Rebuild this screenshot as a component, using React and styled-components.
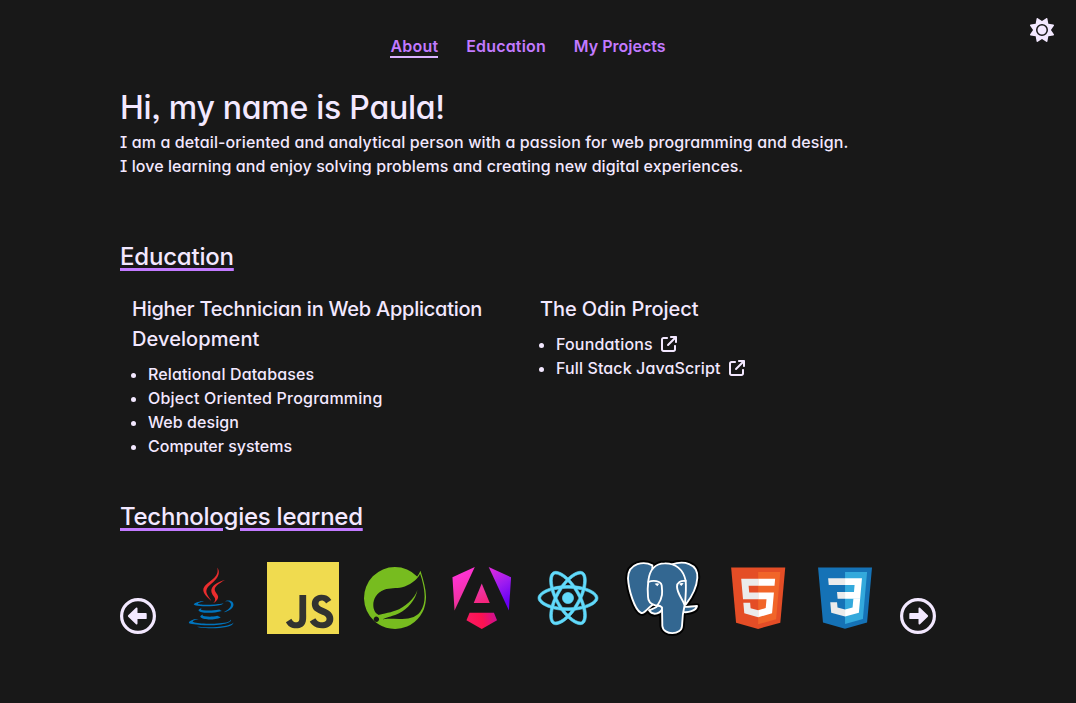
import React from "react";
import styled, { createGlobalStyle } from "styled-components";
import { FaSun, FaArrowUpRightFromSquare } from "react-icons/fa6";
import { SiSpring, SiReact } from "react-icons/si";

const Global = createGlobalStyle`
  *, *::before, *::after { box-sizing: border-box; margin: 0; padding: 0; }
  body {
    background: #181818;
    color: #f3e8ff;
    font: 450 16px/24px Inter, "Noto Sans", sans-serif;
    font-feature-settings: "cv11", "ss03";
  }
`;

const Page = styled.div`
  position: relative;
  min-height: 703px;
  padding: 34px 0 0 120px;
`;
const ThemeButton = styled.button`
  position: absolute;
  top: 18px;
  right: 22px;
  width: 24px;
  height: 24px;
  border: 0;
  background: none;
  color: #f3e8ff;
  cursor: pointer;
  svg { display: block; }
`;
const Content = styled.div`
  width: 816px;
`;
const Nav = styled.nav`
  display: flex;
  justify-content: center;
  gap: 28px;
  height: 52px;
`;
const NavLink = styled.a`
  height: 24px;
  white-space: nowrap;
  font-weight: 600;
  letter-spacing: ${(p) => p.$track}px;
  color: #c27aff;
  border-bottom: 2px solid ${(p) => (p.$active ? "#dab2ff" : "transparent")};
`;
const Title = styled.h1`
  font-size: 32px;
  line-height: 44px;
  font-weight: 480;
  letter-spacing: -0.26px;
`;
const Line = styled.p`
  white-space: nowrap;
  letter-spacing: ${(p) => p.$track}px;
  font-weight: 500;
  font-feature-settings: "cv11", "ss03", "cv08";
`;
const Heading = styled.h2`
  font-size: 24px;
  line-height: 36px;
  font-weight: 500;
  letter-spacing: ${(p) => p.$track}px;
  text-decoration: underline #c27aff 3px;
  text-underline-offset: 3px;
`;
const Section = styled.section`
  margin-top: ${(p) => p.$top}px;
`;
const Columns = styled.div`
  display: grid;
  grid-template-columns: 1fr 1fr;
  margin-top: 19px;
`;
const Course = styled.div`
  padding-left: 12px;
`;
const CourseTitle = styled.h3`
  font-size: 20px;
  line-height: 30px;
  font-weight: 490;
  letter-spacing: ${(p) => p.$track}px;
  margin-bottom: 8px;
`;
const SecondLine = styled.span`
  display: block;
  letter-spacing: 0.08px;
`;
const List = styled.ul`
  list-style: none;
`;
const Item = styled.li`
  display: flex;
  align-items: center;
  height: 24px;
  font-weight: 500;
  letter-spacing: ${(p) => p.$track}px;
  &::before {
    content: "";
    width: 5px;
    height: 5px;
    margin: 2px 12px 0 -1px;
    border-radius: 50%;
    background: #f3e8ff;
  }
  svg { margin-left: 8px; }
`;
const Carousel = styled.div`
  display: flex;
  align-items: center;
  justify-content: space-between;
  height: 72px;
  margin-top: 27px;
`;
const Arrow = styled.button`
  align-self: flex-end;
  width: 36px;
  height: 36px;
  border: 0;
  background: none;
  cursor: pointer;
  svg { display: block; transform: ${(p) => (p.$next ? "scaleX(-1)" : "none")}; }
`;
const Logo = styled.div`
  flex: none;
  display: flex;
  align-items: center;
  justify-content: center;
  width: ${(p) => p.$w || 62}px;
  height: ${(p) => p.$h || 62}px;
  color: ${(p) => p.$color || "inherit"};
  svg { flex: none; display: block; }
`;

const ArrowIcon = () => (
  <svg width="36" height="36" viewBox="0 0 36 36">
    <circle cx="18" cy="18" r="16.4" fill="none" stroke="#f3e8ff" strokeWidth="3.2" />
    <path d="M8.8 18 16.6 10.4V15.8H25.8V20.2H16.6V25.6Z" fill="#f3e8ff" stroke="#f3e8ff" strokeWidth="1.8" strokeLinejoin="round" />
  </svg>
);

const Java = () => (
  <svg width="62" height="62" viewBox="1.6 0 128 128">
    <g fill="#0074BD">
      <path d="M47.617 98.12s-4.767 2.774 3.397 3.71c9.892 1.13 14.947.968 25.845-1.092 0 0 2.871 1.795 6.873 3.351-24.439 10.47-55.308-.607-36.115-5.969zm-2.988-13.665s-5.348 3.959 2.823 4.805c10.567 1.091 18.91 1.18 33.354-1.6 0 0 1.993 2.025 5.132 3.131-29.542 8.64-62.446.68-41.309-6.336z" />
      <path d="M102.123 108.229s3.529 2.91-3.888 5.159c-14.102 4.272-58.706 5.56-71.094.171-4.451-1.938 3.899-4.625 6.526-5.192 2.739-.593 4.303-.485 4.303-.485-4.953-3.487-32.013 6.85-13.743 9.815 49.821 8.076 90.817-3.637 77.896-9.468zM49.912 70.294s-22.686 5.389-8.033 7.348c6.188.828 18.518.638 30.011-.326 9.39-.789 18.813-2.474 18.813-2.474s-3.308 1.419-5.704 3.053c-23.042 6.061-67.544 3.238-54.731-2.958 10.832-5.239 19.644-4.643 19.644-4.643zm40.697 22.747c23.421-12.167 12.591-23.86 5.032-22.285-1.848.385-2.677.72-2.677.72s.688-1.079 2-1.543c14.953-5.255 26.451 15.503-4.823 23.725 0-.002.359-.327.468-.617z" />
      <path d="M52.214 126.021c22.476 1.437 57-.8 57.817-11.436 0 0-1.571 4.032-18.577 7.231-19.186 3.612-42.854 3.191-56.887.874 0 .001 2.875 2.381 17.647 3.331z" />
    </g>
    <g fill="#EA2D2E">
      <path d="M69.802 61.271c6.025 6.935-1.58 13.17-1.58 13.17s15.289-7.891 8.269-17.777c-6.559-9.215-11.587-13.792 15.635-29.58 0 .001-42.731 10.67-22.324 34.187z" />
      <path d="M76.491 1.587S89.459 14.563 64.188 34.51c-20.266 16.006-4.621 25.13-.007 35.559-11.831-10.673-20.509-20.07-14.688-28.815C58.041 28.42 81.722 22.195 76.491 1.587z" />
    </g>
  </svg>
);

const JavaScript = () => (
  <svg width="72" height="72" viewBox="1.4 1.4 125.2 125.2">
    <path fill="#F0DB4F" d="M1.408 1.408h125.184v125.185H1.408z" />
    <path fill="#323330" d="M116.347 96.736c-.917-5.711-4.641-10.508-15.672-14.981-3.832-1.761-8.104-3.022-9.377-5.926-.452-1.69-.512-2.642-.226-3.665.821-3.32 4.784-4.355 7.925-3.403 2.023.678 3.938 2.237 5.093 4.724 5.402-3.498 5.391-3.475 9.163-5.879-1.381-2.141-2.118-3.129-3.022-4.045-3.249-3.629-7.676-5.498-14.756-5.355l-3.688.477c-3.534.893-6.902 2.748-8.877 5.235-5.926 6.724-4.236 18.492 2.975 23.335 7.104 5.332 17.54 6.545 18.873 11.531 1.297 6.104-4.486 8.08-10.234 7.378-4.236-.881-6.592-3.034-9.139-6.949-4.688 2.713-4.688 2.713-9.508 5.485 1.143 2.499 2.344 3.63 4.26 5.795 9.068 9.198 31.76 8.746 35.83-5.176.165-.478 1.261-3.666.38-8.581zM69.462 58.943H57.753l-.048 30.272c0 6.438.333 12.34-.714 14.149-1.713 3.558-6.152 3.117-8.175 2.427-2.059-1.012-3.106-2.451-4.319-4.485-.333-.584-.583-1.036-.667-1.071l-9.52 5.83c1.583 3.249 3.915 6.069 6.902 7.901 4.462 2.678 10.459 3.499 16.731 2.059 4.082-1.189 7.604-3.652 9.448-7.401 2.666-4.915 2.094-10.864 2.07-17.444.06-10.735.001-21.468.001-32.237z" />
  </svg>
);

const Angular = () => (
  <svg width="62" height="62" viewBox="0.1 0 24 24">
    <defs>
      <linearGradient id="ngWarm" gradientUnits="userSpaceOnUse" x1="4" y1="2" x2="14" y2="22">
        <stop offset="0" stopColor="#ff33d6" />
        <stop offset="0.45" stopColor="#f0329f" />
        <stop offset="1" stopColor="#ff0f3c" />
      </linearGradient>
      <linearGradient id="ngCool" gradientUnits="userSpaceOnUse" x1="14.5" y1="1" x2="22.5" y2="13">
        <stop offset="0" stopColor="#e02be0" />
        <stop offset="0.55" stopColor="#9a1bf0" />
        <stop offset="1" stopColor="#6a00f5" />
      </linearGradient>
      <linearGradient id="ngBase" gradientUnits="userSpaceOnUse" x1="6" y1="21" x2="18" y2="18">
        <stop offset="0" stopColor="#fa1a63" />
        <stop offset="0.5" stopColor="#fb1250" />
        <stop offset="1" stopColor="#c80f9c" />
      </linearGradient>
    </defs>
    <path fill="url(#ngWarm)" d="M9.308 0 .662 3.999l.814 12.856L9.308 0Z" />
    <path fill="url(#ngCool)" d="M14.692 0l7.832 16.855.814-12.856L14.692 0Z" />
    <path fill="url(#ngWarm)" d="M8.903 13.93h6.198L12 6.396 8.903 13.93Z" />
    <path fill="url(#ngBase)" d="M16.712 17.711H7.288l-1.204 2.916L12 24l5.916-3.373-1.204-2.916Z" />
  </svg>
);

const EAR_LEFT = "M113 46C90 34 41 36 40 85C42 122 60 178 78 188C88 194 96 176 114 164Z";
const EAR_RIGHT = "M172 43C205 32 251 38 248 84C246 112 230 142 213 164L190 120Z";
const TUSK_LEFT = "M103 181C110 176 122 177 130 166L144 170C142 190 116 200 103 181Z";
const TUSK_RIGHT = "M204 169C216 174 230 168 247 168C245 182 220 190 201 185Z";
const HEAD = "M100 140C98 122 99 108 101 92C105 60 122 40 150 40C182 39 206 58 213 92C215 118 213 140 211 160C207 176 203 190 202 228C201 256 146 257 143 228L142 172C134 164 128 168 122 166C108 162 100 156 100 140Z";

const Postgres = () => (
  <svg width="80" height="76" viewBox="25 30 240 228">
    <g fill="#000" stroke="#000" strokeWidth="17" strokeLinejoin="round">
      <path d={EAR_LEFT} /><path d={EAR_RIGHT} /><path d={TUSK_LEFT} /><path d={TUSK_RIGHT} /><path d={HEAD} />
    </g>
    <g fill="#336791" stroke="#fff" strokeWidth="5.6" strokeLinejoin="round" strokeLinecap="round">
      <path d={EAR_LEFT} />
      <path d={EAR_RIGHT} />
      <path d={TUSK_LEFT} />
      <path d={TUSK_RIGHT} />
      <path d={HEAD} />
      <path fill="none" d="M101 96C115 90 138 92 141 106C143 124 146 142 129 165" />
      <path fill="none" d="M213 93C198 91 187 98 187 110C188 132 202 144 209 163" />
    </g>
    <path d="M120 101Q127 98 134 101L128 109ZM193 101Q200 97 207 100L200 108Z" fill="#fff" />
  </svg>
);

const Html = () => (
  <svg width="63" height="62.4" viewBox="-1.4 0.6 128 126.6">
    <path fill="#E44D26" d="M19.037 113.876L9.032 1.661h109.936l-10.016 112.198-45.019 12.48z" />
    <path fill="#F16529" d="M64 116.8l36.378-10.086 8.559-95.878H64z" />
    <path fill="#EBEBEB" d="M64 52.455H45.788L44.53 38.361H64V24.599H29.489l.33 3.692 3.382 37.927H64zm0 35.743l-.061.017-15.327-4.14-.979-10.975H33.816l1.928 21.609 28.193 7.826.063-.017z" />
    <path fill="#fff" d="M63.952 52.455v13.763h16.947l-1.597 17.849-15.35 4.143v14.319l28.215-7.82.207-2.325 3.234-36.233.335-3.696h-3.708zm0-27.856v13.762h33.244l.276-3.092.628-6.978.329-3.692z" />
  </svg>
);

const Css = () => (
  <svg width="62.5" height="62.4" viewBox="-1.6 0.6 128 127">
    <path fill="#1572B6" d="M18.814 114.123L8.76 1.352h110.48l-10.064 112.754-45.243 12.543-45.119-12.526z" />
    <path fill="#33A9DC" d="M64.001 117.062l36.559-10.136 8.601-96.354h-45.16v106.49z" />
    <path fill="#fff" d="M64.001 51.429h18.302l1.264-14.163H64.001V23.435h34.682l-.332 3.711-3.4 38.114h-30.95V51.429z" />
    <path fill="#EBEBEB" d="M64.083 87.349l-.061.018-15.403-4.159-.985-11.031H33.752l1.937 21.717 28.331 7.863.063-.018v-14.39z" />
    <path fill="#fff" d="M81.127 64.675l-1.666 18.522-15.426 4.164v14.39l28.354-7.858.208-2.337 2.406-26.881H81.127z" />
    <path fill="#EBEBEB" d="M64.048 23.435v13.831H30.64l-.277-3.108-.63-7.012-.331-3.711h34.646zm-.047 27.996v13.831H48.792l-.277-3.108-.631-7.012-.33-3.711h16.447z" />
  </svg>
);

export default function App() {
  return (
    <>
      <Global />
      <Page>
        <ThemeButton aria-label="Toggle theme"><FaSun size={24} /></ThemeButton>
        <Content>
          <Nav>
            <NavLink $active $track={0.2}>About</NavLink>
            <NavLink $track={0.16}>Education</NavLink>
            <NavLink $track={0}>My Projects</NavLink>
          </Nav>
          <Title>Hi, my name is Paula!</Title>
          <Line $track={0.112}>I am a detail-oriented and analytical person with a passion for web programming and design.</Line>
          <Line $track={0.075}>I love learning and enjoy solving problems and creating new digital experiences.</Line>
          <Section $top={61}>
            <Heading $track={-0.2}>Education</Heading>
            <Columns>
              <Course>
                <CourseTitle $track={-0.25}>
                  Higher Technician in Web Application <SecondLine>Development</SecondLine>
                </CourseTitle>
                <List>
                  <Item $track={0.14}>Relational Databases</Item>
                  <Item $track={0.22}>Object Oriented Programming</Item>
                  <Item $track={0.07}>Web design</Item>
                  <Item $track={-0.01}>Computer systems</Item>
                </List>
              </Course>
              <Course>
                <CourseTitle $track={-0.08}>The Odin Project</CourseTitle>
                <List>
                  <Item $track={0.17}>Foundations <FaArrowUpRightFromSquare size={16} /></Item>
                  <Item $track={0.12}>Full Stack JavaScript <FaArrowUpRightFromSquare size={16} /></Item>
                </List>
              </Course>
            </Columns>
          </Section>
          <Section $top={41}>
            <Heading $track={-0.26}>Technologies learned</Heading>
            <Carousel>
              <Arrow aria-label="Previous"><ArrowIcon /></Arrow>
              <Logo><Java /></Logo>
              <Logo $w={72} $h={72}><JavaScript /></Logo>
              <Logo $color="#77bc1f"><SiSpring size={62} /></Logo>
              <Logo><Angular /></Logo>
              <Logo $color="#61dafb"><SiReact size={60} stroke="currentColor" strokeWidth={0.25} overflow="visible" /></Logo>
              <Logo $w={78} $h={72}><Postgres /></Logo>
              <Logo><Html /></Logo>
              <Logo><Css /></Logo>
              <Arrow $next aria-label="Next"><ArrowIcon /></Arrow>
            </Carousel>
          </Section>
        </Content>
      </Page>
    </>
  );
}
